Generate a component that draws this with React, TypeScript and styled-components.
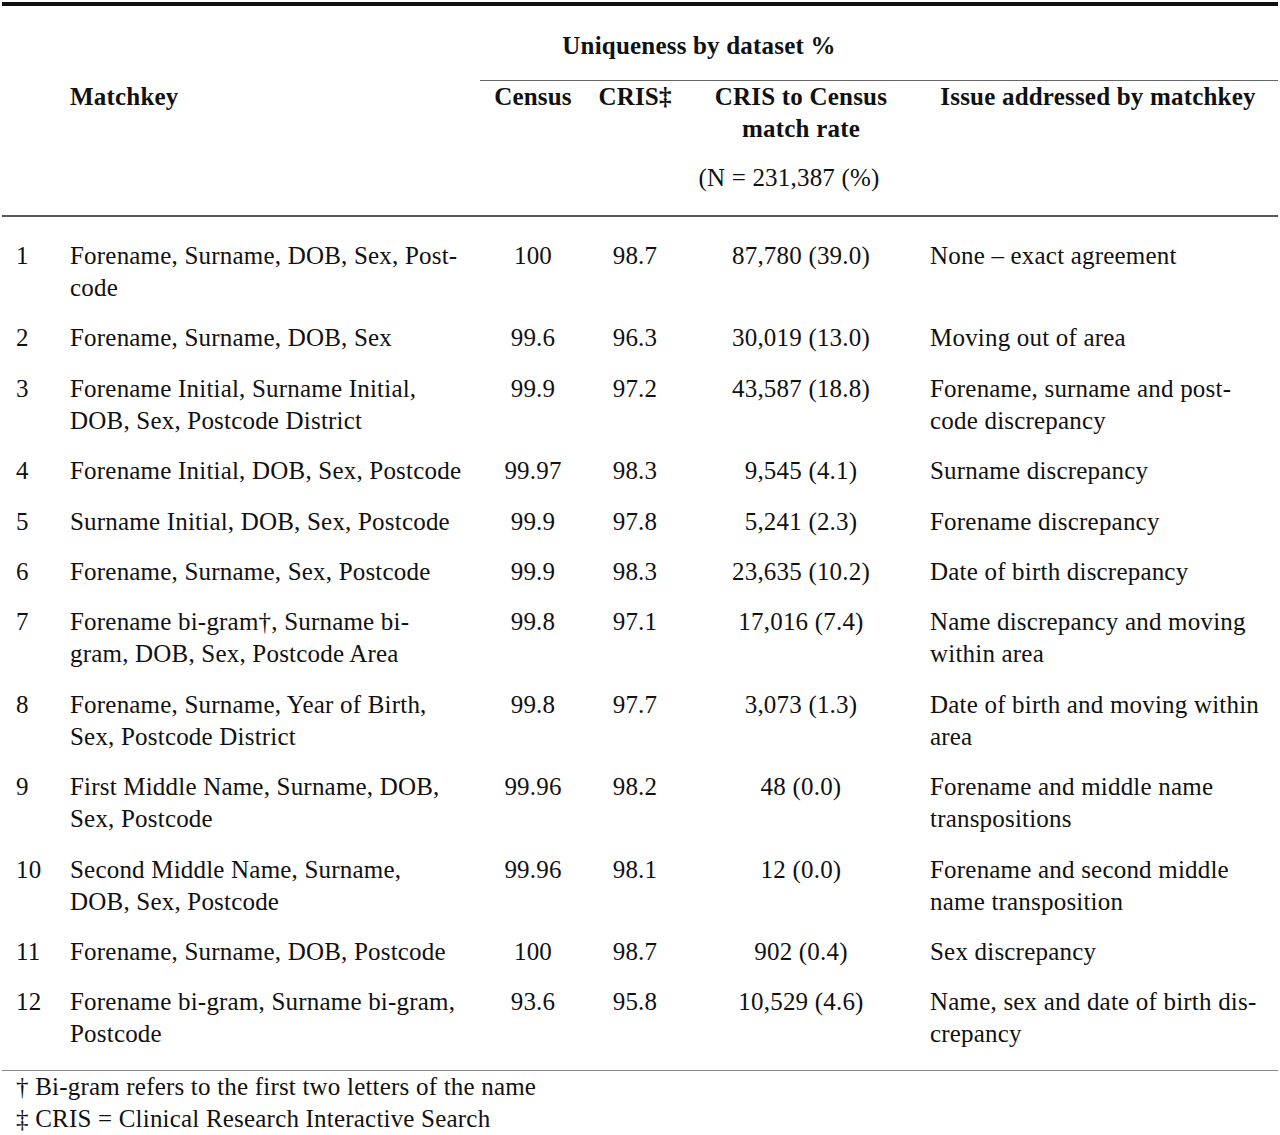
import React from 'react'
import styled, { createGlobalStyle } from 'styled-components'

const GlobalStyle = createGlobalStyle`
  html, body {
    margin: 0;
    padding: 0;
    background: #fff;
  }
  body {
    font-family: 'Liberation Serif', 'Times New Roman', serif;
    color: #111;
  }
`

const COLUMNS = '68px 410px 106px 98px 234px 1fr'

const TableWrapper = styled.div`
  width: 1276px;
  margin: 0 2px;
  font-size: 25px;
  letter-spacing: 0.2px;
  line-height: 32px;
`

const TopRule = styled.div`
  height: 4px;
  background: #111;
  margin-top: 2px;
`

const HeadGrid = styled.div`
  display: grid;
  grid-template-columns: ${COLUMNS};
  border-bottom: 2px solid #5a5a5a;
  padding-bottom: 21px;
`

const GroupCell = styled.div`
  grid-column: 3 / 7;
  padding-top: 24px;
  padding-bottom: 18px;
  border-bottom: 1px solid #666;
`

const GroupLabel = styled.div`
  width: 438px;
  text-align: center;
  font-weight: bold;
`

const HeadCell = styled.div<{ $col: number; $align?: string }>`
  grid-column: ${p => p.$col};
  grid-row: 2;
  font-weight: bold;
  text-align: ${p => p.$align || 'center'};
  white-space: nowrap;
`

const SubNote = styled.div`
  font-weight: normal;
  margin-top: 17px;
  padding-right: 24px;
`

const Body = styled.div`
  padding-top: 14px;
  padding-bottom: 10px;
  border-bottom: 1px solid #8a8a8a;
`

const Row = styled.div`
  display: grid;
  grid-template-columns: ${COLUMNS};
  padding: 9px 0 9.4px;
`

const Cell = styled.div<{ $align?: string; $pad?: number }>`
  text-align: ${p => p.$align || 'left'};
  padding-left: ${p => p.$pad || 0}px;
  white-space: nowrap;
`

const Footnotes = styled.div`
  padding-left: 14px;
`

const Note = styled.div``

type Entry = {
  n: number
  key: string[]
  census: string
  cris: string
  rate: string
  issue: string[]
}

const rows: Entry[] = [
  { n: 1, key: ['Forename, Surname, DOB, Sex, Post-', 'code'], census: '100', cris: '98.7', rate: '87,780 (39.0)', issue: ['None – exact agreement'] },
  { n: 2, key: ['Forename, Surname, DOB, Sex'], census: '99.6', cris: '96.3', rate: '30,019 (13.0)', issue: ['Moving out of area'] },
  { n: 3, key: ['Forename Initial, Surname Initial,', 'DOB, Sex, Postcode District'], census: '99.9', cris: '97.2', rate: '43,587 (18.8)', issue: ['Forename, surname and post-', 'code discrepancy'] },
  { n: 4, key: ['Forename Initial, DOB, Sex, Postcode'], census: '99.97', cris: '98.3', rate: '9,545 (4.1)', issue: ['Surname discrepancy'] },
  { n: 5, key: ['Surname Initial, DOB, Sex, Postcode'], census: '99.9', cris: '97.8', rate: '5,241 (2.3)', issue: ['Forename discrepancy'] },
  { n: 6, key: ['Forename, Surname, Sex, Postcode'], census: '99.9', cris: '98.3', rate: '23,635 (10.2)', issue: ['Date of birth discrepancy'] },
  { n: 7, key: ['Forename bi-gram†, Surname bi-', 'gram, DOB, Sex, Postcode Area'], census: '99.8', cris: '97.1', rate: '17,016 (7.4)', issue: ['Name discrepancy and moving', 'within area'] },
  { n: 8, key: ['Forename, Surname, Year of Birth,', 'Sex, Postcode District'], census: '99.8', cris: '97.7', rate: '3,073 (1.3)', issue: ['Date of birth and moving within', 'area'] },
  { n: 9, key: ['First Middle Name, Surname, DOB,', 'Sex, Postcode'], census: '99.96', cris: '98.2', rate: '48 (0.0)', issue: ['Forename and middle name', 'transpositions'] },
  { n: 10, key: ['Second Middle Name, Surname,', 'DOB, Sex, Postcode'], census: '99.96', cris: '98.1', rate: '12 (0.0)', issue: ['Forename and second middle', 'name transposition'] },
  { n: 11, key: ['Forename, Surname, DOB, Postcode'], census: '100', cris: '98.7', rate: '902 (0.4)', issue: ['Sex discrepancy'] },
  { n: 12, key: ['Forename bi-gram, Surname bi-gram,', 'Postcode'], census: '93.6', cris: '95.8', rate: '10,529 (4.6)', issue: ['Name, sex and date of birth dis-', 'crepancy'] },
]

const Lines = ({ lines }: { lines: string[] }) => (
  <>
    {lines.map((l, i) => (
      <div key={i}>{l}</div>
    ))}
  </>
)

const App = () => {
  return (
    <>
      <GlobalStyle />
      <TableWrapper>
        <TopRule />
        <HeadGrid>
          <GroupCell>
            <GroupLabel>Uniqueness by dataset %</GroupLabel>
          </GroupCell>
          <HeadCell $col={2} $align="left">Matchkey</HeadCell>
          <HeadCell $col={3}>Census</HeadCell>
          <HeadCell $col={4}>CRIS‡</HeadCell>
          <HeadCell $col={5}>
            <div>CRIS to Census</div>
            <div>match rate</div>
            <SubNote>(N = 231,387 (%)</SubNote>
          </HeadCell>
          <HeadCell $col={6}>Issue addressed by matchkey</HeadCell>
        </HeadGrid>
        <Body>
          {rows.map(r => (
            <Row key={r.n}>
              <Cell $pad={14}>{r.n}</Cell>
              <Cell>
                <Lines lines={r.key} />
              </Cell>
              <Cell $align="center">{r.census}</Cell>
              <Cell $align="center">{r.cris}</Cell>
              <Cell $align="center">{r.rate}</Cell>
              <Cell $pad={12}>
                <Lines lines={r.issue} />
              </Cell>
            </Row>
          ))}
        </Body>
        <Footnotes>
          <Note>† Bi-gram refers to the first two letters of the name</Note>
          <Note>‡ CRIS = Clinical Research Interactive Search</Note>
        </Footnotes>
      </TableWrapper>
    </>
  )
}

export default App
